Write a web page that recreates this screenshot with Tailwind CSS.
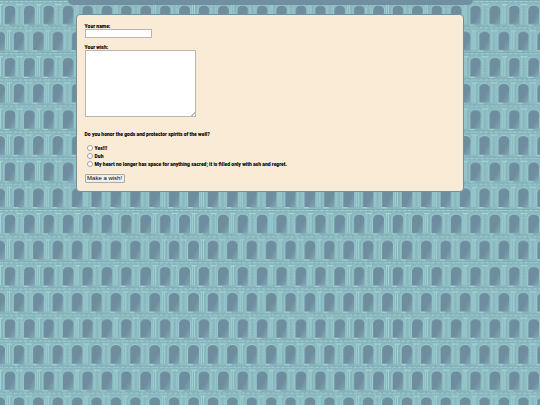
<!DOCTYPE html>
<html lang="en">
<head>
    <meta charset="UTF-8">
    <meta name="viewport" content="width=device-width, initial-scale=1.0">
    <title>Wishing Well</title>
    <script src="https://cdn.jsdelivr.net/npm/@tailwindcss/browser@4"></script>
</head>
<body class="min-h-screen bg-[#8cbac0] font-['Roboto','Liberation_Sans',sans-serif] text-black">
    <!-- Tiled arcade background -->
    <svg class="fixed inset-0 -z-10 h-full w-full" aria-hidden="true">
        <defs>
            <linearGradient id="shade" x1="0" y1="0" x2="1" y2="1">
                <stop offset="0.6" stop-color="#6e8e9f"/>
                <stop offset="1" stop-color="#84a9b5"/>
            </linearGradient>
            <g id="arch">
                <path d="M-0.500 18.500V4Q0 -0.500 5 -0.500T10.500 4V18.500Z" fill="url(#shade)"/>
                <path d="M-1 18V3Q0 -1 5 -1T11 3V18" fill="none" stroke="#9ed0d2" stroke-width="0.800"/>
                <path d="M-1 19H4" stroke="#acdddd"/>
                <path d="M5 19H11" stroke="#84b0b9" stroke-width="0.800"/>
            </g>
            <g id="row">
                <path d="M0 -5.500H38.800" stroke="#7ea9b3"/>
                <path d="M0 -4.500H38.800" stroke="#a2d2d4" stroke-dasharray="3 2"/>
                <path d="M0 -3H38.800" stroke="#84b0ba" stroke-dasharray="4 2"/>
                <use href="#arch" x="5"/>
                <use href="#arch" x="24.400"/>
                <path d="M17.500 -1V18M21.500 -1V18" stroke="#9accd0" stroke-dasharray="2 1"/>
                <path d="M19.500 0V18" stroke="#82aeb8" stroke-dasharray="1 2"/>
                <path d="M0.500 -1V18M37.500 -1V18" stroke="#a2d4d6"/>
                <path d="M2 0V18M38.500 0V18" stroke="#7faab5" stroke-width="0.700"/>
                <path d="M16 -1.500H23M36 -1.500H38.800M0 -1.500H3" stroke="#a6d7d9"/>
            </g>
            <pattern id="arcade" width="38.800" height="52.250" patternUnits="userSpaceOnUse">
                <use href="#row" y="6"/>
                <use href="#row" x="-29.800" y="32"/>
                <use href="#row" x="9" y="32"/>
            </pattern>
        </defs>
        <rect width="100%" height="100%" fill="url(#arcade)"/>
    </svg>

    <header class="mx-auto h-[5px] w-3/4 rounded-b-md bg-[#7090a2]"></header>

    <main class="mx-auto mt-[9px] w-[72%] rounded-[4px] border border-[#7090a2] bg-[#faebd7] p-2">
        <form class="text-[5px] leading-[6px] font-black">
            <label for="name" class="block">Your name:</label>
            <input type="text" id="name" class="block h-[9px] w-[67px] border border-[#b8b4ae] bg-white">

            <label for="wish" class="mt-[6px] block">Your wish:</label>
            <textarea id="wish" class="block h-[67px] w-[111px] resize border border-[#b8b4ae] bg-white [&::-webkit-resizer]:bg-[linear-gradient(135deg,#fff_50%,#bbb_50%,#bbb_65%,#fff_65%)] [&::-webkit-resizer]:bg-[length:4px_4px] [&::-webkit-resizer]:bg-right-bottom [&::-webkit-resizer]:bg-no-repeat"></textarea>

            <fieldset>
                <legend class="pt-[14px] pb-[7px]">Do you honor the gods and protector spirits of the well?</legend>
                <label class="flex h-2 items-center gap-[2px] pl-[2px]"><input type="radio" name="honor" class="-mt-px size-[6px] appearance-none rounded-full border border-[#a5a19b] bg-white checked:bg-[#0075ff]">Yes!!!</label>
                <label class="flex h-2 items-center gap-[2px] pl-[2px]"><input type="radio" name="honor" class="-mt-px size-[6px] appearance-none rounded-full border border-[#a5a19b] bg-white checked:bg-[#0075ff]">Duh</label>
                <label class="flex h-2 items-center gap-[2px] pl-[2px]"><input type="radio" name="honor" class="-mt-px size-[6px] appearance-none rounded-full border border-[#a5a19b] bg-white checked:bg-[#0075ff]">My heart no longer has space for anything sacred; it is filled only with ash and regret.</label>
            </fieldset>

            <button type="submit" class="mt-[6px] block h-[9px] w-10 rounded-[1px] border border-[#aaa] bg-[#efefef] font-['Liberation_Sans',sans-serif] text-[6px] leading-[7px] font-normal">Make a wish!</button>
        </form>
    </main>
</body>
</html>
